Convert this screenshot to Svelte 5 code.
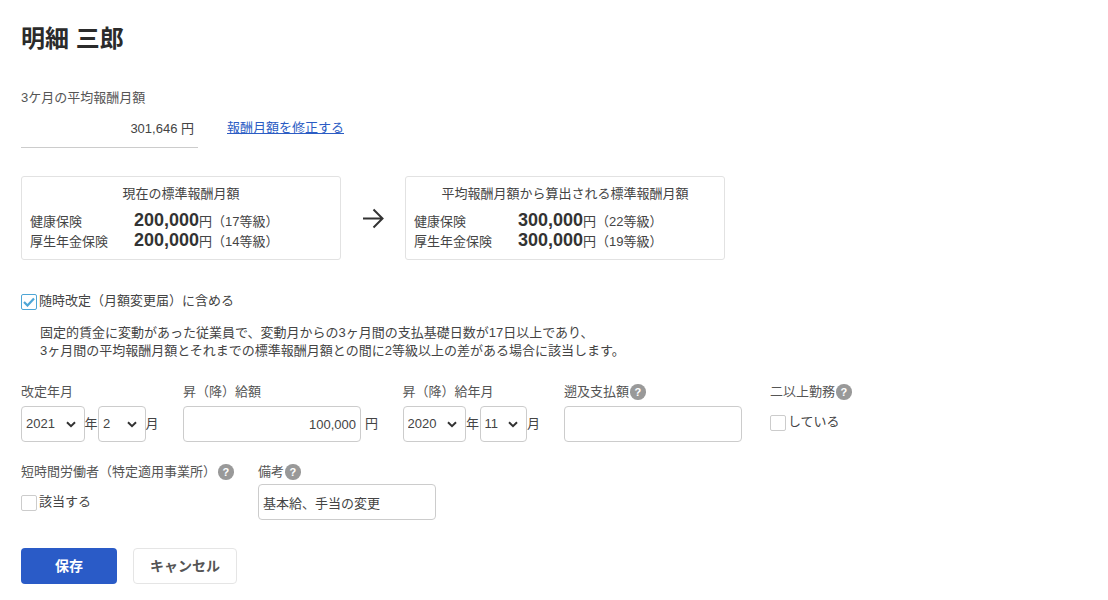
<script>
  let fixedChange = $state(true);
  let working = $state(false);
  let shortTime = $state(false);
  let startYear = $state("2021");
  let startMonth = $state("2");
  let raiseYear = $state("2020");
  let raiseMonth = $state("11");
  let raiseAmount = $state("100,000");
  let backPay = $state("");
  let note = $state("基本給、手当の変更");

  const current = [
    { name: "健康保険", amount: "200,000", grade: "17" },
    { name: "厚生年金保険", amount: "200,000", grade: "14" }
  ];
  const next = [
    { name: "健康保険", amount: "300,000", grade: "22" },
    { name: "厚生年金保険", amount: "300,000", grade: "19" }
  ];
</script>

{#snippet help()}
  <span class="help">?</span>
{/snippet}

{#snippet card(title, rows)}
  <div class="card">
    <div class="card-title">{title}</div>
    {#each rows as row}
      <div class="card-row">
        <span class="ins">{row.name}</span>
        <span class="amount">{row.amount}</span><span>円（{row.grade}等級）</span>
      </div>
    {/each}
  </div>
{/snippet}

<main>
  <h1>明細 三郎</h1>

  <div class="label avg-label">3ケ月の平均報酬月額</div>
  <div class="avg-row">
    <div class="avg-value">301,646 円</div>
    <a href="#fix">報酬月額を修正する</a>
  </div>

  <div class="cards">
    {@render card("現在の標準報酬月額", current)}
    <svg class="arrow" width="24" height="24" viewBox="0 0 24 24" fill="none" stroke="#333" stroke-width="2">
      <path d="M2 12.5H21M12.5 3.5L21.5 12.5L12.5 21.5" />
    </svg>
    {@render card("平均報酬月額から算出される標準報酬月額", next)}
  </div>

  <label class="check main-check">
    <input type="checkbox" bind:checked={fixedChange} />
    <span class="box">
      <svg width="12" height="10" viewBox="0 0 12 10" fill="none" stroke="#4ea6d6" stroke-width="2.2">
        <path d="M1 5L4.5 8.5L11 1.5" />
      </svg>
    </span>
    <span class="check-text">随時改定（月額変更届）に含める</span>
  </label>

  <p class="desc">
    固定的賃金に変動があった従業員で、変動月からの3ヶ月間の支払基礎日数が17日以上であり、<br />
    3ヶ月間の平均報酬月額とそれまでの標準報酬月額との間に2等級以上の差がある場合に該当します。
  </p>

  <div class="fields first">
    <div class="field w-date">
      <div class="label">改定年月</div>
      <div class="inline">
        <select class="year" bind:value={startYear}><option>2021</option><option>2020</option></select>
        <span class="unit">年</span>
        <select class="month" bind:value={startMonth}><option>1</option><option>2</option><option>3</option></select>
        <span>月</span>
      </div>
    </div>
    <div class="field w-amount">
      <div class="label">昇（降）給額</div>
      <div class="inline gap">
        <input class="text right" bind:value={raiseAmount} />
        <span>円</span>
      </div>
    </div>
    <div class="field w-raise">
      <div class="label">昇（降）給年月</div>
      <div class="inline">
        <select class="year" bind:value={raiseYear}><option>2020</option><option>2021</option></select>
        <span class="unit">年</span>
        <select class="month" bind:value={raiseMonth}><option>10</option><option>11</option><option>12</option></select>
        <span>月</span>
      </div>
    </div>
    <div class="field w-back">
      <div class="label">遡及支払額{@render help()}</div>
      <input class="text" bind:value={backPay} />
    </div>
    <div class="field">
      <div class="label">二以上勤務{@render help()}</div>
      <label class="check sub-check">
        <input type="checkbox" bind:checked={working} />
        <span class="box"></span>
        <span class="check-text">している</span>
      </label>
    </div>
  </div>

  <div class="fields second">
    <div class="field w-short">
      <div class="label">短時間労働者（特定適用事業所）<span class="spaced">{@render help()}</span></div>
      <label class="check sub-check">
        <input type="checkbox" bind:checked={shortTime} />
        <span class="box"></span>
        <span class="check-text">該当する</span>
      </label>
    </div>
    <div class="field">
      <div class="label">備考{@render help()}</div>
      <input class="text" bind:value={note} />
    </div>
  </div>

  <div class="actions">
    <button class="save">保存</button>
    <button class="cancel">キャンセル</button>
  </div>
</main>

<style>
  :global(body) {
    background: #fff;
  }

  main {
    padding: 24px 21px 0;
    font-family: "Liberation Sans", "Noto Sans CJK JP", sans-serif;
    font-size: 13px;
    line-height: 18px;
    color: #444;
  }

  h1 {
    margin: 0;
    font-size: 24px;
    line-height: 30px;
    font-weight: 700;
    color: #2b2b2b;
  }

  .label {
    display: flex;
    align-items: center;
    height: 18px;
    color: #555;
  }

  .avg-label {
    margin-top: 35px;
  }

  .avg-row {
    display: flex;
    align-items: flex-start;
    margin-top: 12px;
  }

  .avg-value {
    box-sizing: border-box;
    width: 177px;
    height: 29px;
    padding: 1px 4px 0 0;
    text-align: right;
    border-bottom: 1px solid #ccc;
  }

  a {
    margin-left: 29px;
    color: #2b5cc4;
  }

  .cards {
    display: flex;
    align-items: center;
    margin-top: 28px;
  }

  .card {
    box-sizing: border-box;
    width: 320px;
    height: 84px;
    padding: 8px 8px 0;
    border: 1px solid #e2e2e2;
    border-radius: 3px;
  }

  .card-title {
    text-align: center;
    margin-bottom: 8px;
  }

  .card-row {
    display: flex;
    align-items: baseline;
    height: 20px;
  }

  .ins {
    width: 104px;
  }

  .amount {
    font-size: 18px;
    font-weight: 700;
    color: #333;
  }

  .arrow {
    margin: 0 20px;
  }

  .check {
    display: flex;
    align-items: flex-start;
    gap: 2px;
    cursor: pointer;
  }

  .check input {
    position: absolute;
    opacity: 0;
    width: 0;
    height: 0;
  }

  .box {
    box-sizing: border-box;
    display: flex;
    align-items: center;
    justify-content: center;
    width: 16px;
    height: 16px;
    border: 1px solid #ccc;
    border-radius: 2px;
  }

  .check input:checked + .box {
    border-color: #4ea6d6;
  }

  .check-text {
    margin-top: -2px;
  }

  .main-check {
    margin-top: 34px;
  }

  .desc {
    margin: 14px 0 0 19px;
    line-height: 18px;
    color: #444;
  }

  .fields {
    display: flex;
  }

  .first {
    margin-top: 23px;
  }

  .second {
    margin-top: 21px;
  }

  .field .label {
    margin-bottom: 5px;
  }

  .second .field .label {
    margin-bottom: 3px;
  }

  .w-date {
    width: 162px;
  }

  .w-amount {
    width: 219.5px;
  }

  .w-raise {
    width: 161.5px;
  }

  .w-back {
    width: 206px;
  }

  .w-short {
    width: 237px;
  }

  .inline {
    display: flex;
    align-items: center;
    height: 36px;
  }

  .gap {
    gap: 4px;
  }

  .unit {
    width: 13.5px;
  }

  select,
  .text {
    box-sizing: border-box;
    height: 36px;
    border: 1px solid #ccc;
    border-radius: 4px;
    background: #fff;
    font: inherit;
    color: #444;
    outline: none;
  }

  select {
    appearance: none;
    padding: 0 0 0 4px;
    background: #fff url("data:image/svg+xml;utf8,<svg xmlns='http://www.w3.org/2000/svg' width='10' height='7' viewBox='0 0 10 7'><path d='M1 1.2L5 5.2L9 1.2' fill='none' stroke='%23333' stroke-width='2'/></svg>") no-repeat right 7.7px center;
  }

  .year {
    width: 63.5px;
  }

  .month {
    width: 47.5px;
  }

  .text {
    display: block;
    width: 178px;
    padding: 0 4px;
  }

  .right {
    text-align: right;
  }

  .help {
    display: inline-flex;
    align-items: center;
    justify-content: center;
    width: 15.5px;
    height: 15.5px;
    margin-left: 1px;
    border-radius: 50%;
    background: #999;
    color: #fff;
    font-size: 11px;
    font-weight: 700;
    line-height: 1;
  }

  .spaced {
    display: inline-flex;
    margin-left: 1px;
  }

  .sub-check {
    margin-top: 14px;
  }

  .actions {
    display: flex;
    gap: 16px;
    margin-top: 28px;
  }

  button {
    height: 36px;
    border-radius: 4px;
    font: inherit;
    font-weight: 700;
    font-size: 14px;
    cursor: pointer;
  }

  .save {
    width: 96px;
    border: none;
    background: #2a5bc7;
    color: #fff;
  }

  .cancel {
    width: 104px;
    border: 1px solid #e5e5e5;
    background: #fff;
    color: #555;
  }
</style>
